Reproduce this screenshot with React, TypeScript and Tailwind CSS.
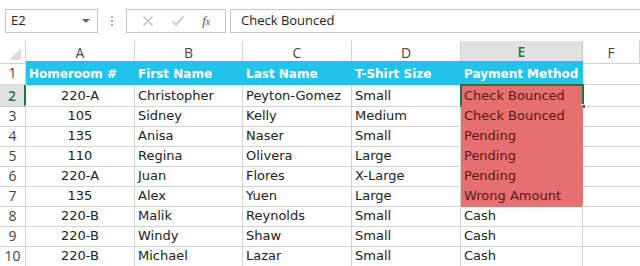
import React from "react";

const rows = [
  ["220-A", "Christopher", "Peyton-Gomez", "Small", "Check Bounced"],
  ["105", "Sidney", "Kelly", "Medium", "Check Bounced"],
  ["135", "Anisa", "Naser", "Small", "Pending"],
  ["110", "Regina", "Olivera", "Large", "Pending"],
  ["220-A", "Juan", "Flores", "X-Large", "Pending"],
  ["135", "Alex", "Yuen", "Large", "Wrong Amount"],
  ["220-B", "Malik", "Reynolds", "Small", "Cash"],
  ["220-B", "Windy", "Shaw", "Small", "Cash"],
  ["220-B", "Michael", "Lazar", "Small", "Cash"],
];

const headers = ["Homeroom #", "First Name", "Last Name", "T-Shirt Size", "Payment Method"];
const cols = "grid grid-cols-[26px_109px_108px_109px_109px_122px_1fr]";
const ui = { fontFamily: "'Open Sans', 'Noto Sans', sans-serif" };
const cellFont = { fontFamily: "'DejaVu Sans', sans-serif" };

function FormulaBar() {
  return (
    <div className="h-[41px] flex items-start pt-[9px] bg-white" style={ui}>
      <div className="ml-[5px] w-[93px] h-[24px] border border-[#c6c6c6] flex items-center justify-between px-[5px] text-[13px] text-[#222]">
        <span>E2</span>
        <svg width="8" height="5" viewBox="0 0 8 5" className="mr-[2px]">
          <path d="M0 0h8L4 4z" fill="#666" />
        </svg>
      </div>
      <div className="w-[28px] h-[24px] flex flex-col items-center justify-center gap-[2px]">
        <span className="w-[2px] h-[2px] bg-[#aaa]" />
        <span className="w-[2px] h-[2px] bg-[#aaa]" />
        <span className="w-[2px] h-[2px] bg-[#aaa]" />
      </div>
      <div className="w-[100px] h-[24px] border border-[#c6c6c6] flex items-center justify-around px-[6px]">
        <svg width="12" height="12" viewBox="0 0 12 12">
          <path d="M1.5 1.5l9 9M10.5 1.5l-9 9" stroke="#bcbcbc" strokeWidth="1.3" />
        </svg>
        <svg width="14" height="12" viewBox="0 0 14 12">
          <path d="M1.5 6.5l3.5 3.5 7.5-8.5" stroke="#bcbcbc" strokeWidth="1.4" fill="none" />
        </svg>
        <span className="text-[13px] italic text-[#555]" style={{ fontFamily: "'Liberation Serif', serif" }}>
          f<span className="text-[10px]">x</span>
        </span>
      </div>
      <div className="ml-[4px] flex-1 h-[24px] border-y border-l border-[#c6c6c6] flex items-center pl-[10px] text-[13px] text-[#222]">
        Check Bounced
      </div>
    </div>
  );
}

function ColumnHeaders() {
  const letters = ["A", "B", "C", "D", "E", "F"];
  return (
    <div className={`${cols} h-[20px] text-[14px] text-[#444]`} style={ui}>
      <div className="border-r border-b border-[#d4d4d4] bg-white relative">
        <svg width="12" height="12" viewBox="0 0 12 12" className="absolute right-[4px] bottom-[3px]">
          <path d="M12 0v12H0z" fill="#dcdcdc" />
        </svg>
      </div>
      {letters.map((l) =>
        l === "E" ? (
          <div
            key={l}
            className="bg-[#e1e1e1] border-r border-[#c8c8c8] border-b-2 border-b-[#217346] flex items-center justify-center text-[#217346] font-semibold"
          >
            {l}
          </div>
        ) : (
          <div key={l} className="border-r border-b border-[#d4d4d4] flex items-center justify-center">
            {l}
          </div>
        )
      )}
    </div>
  );
}

export default function App() {
  return (
    <div className="w-[640px] h-[266px] overflow-hidden bg-white">
      <FormulaBar />
      <ColumnHeaders />
      <div className={`${cols} h-[24px]`}>
        <div className="border-r border-b border-[#d4d4d4] flex items-end justify-center pb-[1px] text-[14px] text-[#444]" style={ui}>
          1
        </div>
        {headers.map((h) => (
          <div
            key={h}
            className="bg-[#21c3eb] flex items-end pl-[3px] pb-[2px] text-[12px] font-bold text-white whitespace-nowrap"
            style={cellFont}
          >
            {h}
          </div>
        ))}
        <div className="border-b border-[#d4d4d4]" />
      </div>
      {rows.map((r, i) => {
        const n = i + 2;
        const selected = n === 2;
        const red = n <= 7;
        return (
          <div key={n} className={`${cols} h-[20px]`}>
            <div
              className={
                selected
                  ? "bg-[#e1e1e1] border-r-2 border-r-[#217346] border-b border-[#c8c8c8] flex items-end justify-center text-[14px] font-semibold text-[#217346]"
                  : "border-r border-b border-[#d4d4d4] flex items-end justify-center text-[14px] text-[#444]"
              }
              style={ui}
            >
              {n}
            </div>
            <div className="border-r border-b border-[#d4d4d4] flex items-end justify-center pb-[1px] text-[13px] text-[#222] whitespace-nowrap" style={cellFont}>
              {r[0]}
            </div>
            {r.slice(1, 4).map((v, j) => (
              <div
                key={j}
                className="border-r border-b border-[#d4d4d4] flex items-end pl-[3px] pb-[1px] text-[13px] text-[#222] whitespace-nowrap"
                style={cellFont}
              >
                {v}
              </div>
            ))}
            <div
              className={`relative border-b flex items-end pl-[3px] pb-[1px] text-[13px] whitespace-nowrap ${
                red ? "bg-[#e6706f] border-[#e6706f] text-[#5a1a1a]" : "border-r border-[#d4d4d4] text-[#222]"
              }`}
              style={cellFont}
            >
              {r[4]}
              {selected && (
                <>
                  <div className="absolute -left-[1px] -top-[1px] -right-[1px] -bottom-[1px] border-2 border-[#217346]" />
                  <div className="absolute -right-[3px] -bottom-[3px] w-[5px] h-[5px] bg-[#217346] border border-white" />
                </>
              )}
            </div>
            <div className="border-b border-[#d4d4d4]" />
          </div>
        );
      })}
    </div>
  );
}
